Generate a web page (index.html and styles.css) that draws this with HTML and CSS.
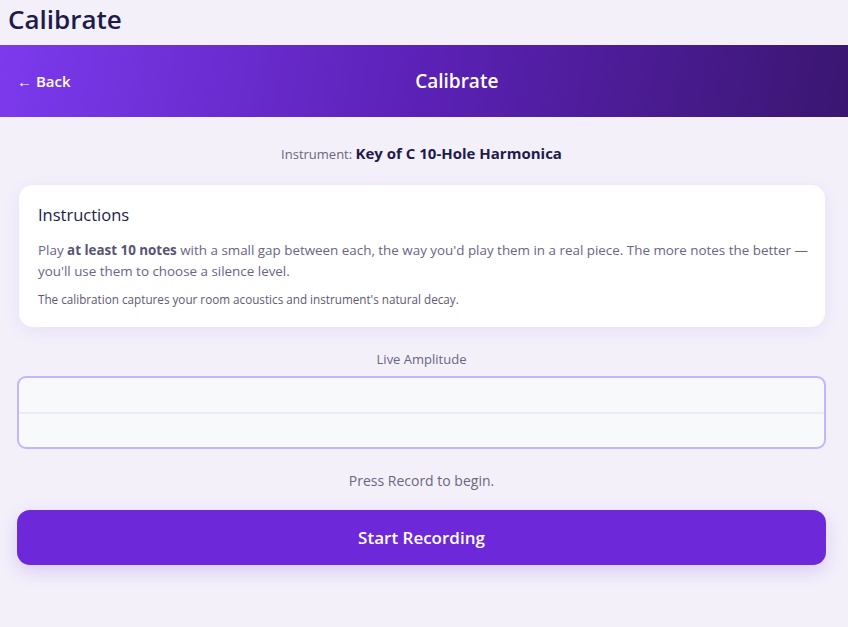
FILE: index.html
```html
<!DOCTYPE html>
<html>
<head>
<meta charset="utf-8">
<link rel="stylesheet" href="styles.css">
</head>
<body>
<h1 class="page-title">Calibrate</h1>
<header class="topbar">
  <a class="back">← Back</a>
  <div class="topbar-title">Calibrate</div>
</header>
<main class="content">
  <p class="instrument">Instrument: <strong>Key of C 10-Hole Harmonica</strong></p>
  <section class="card">
    <h2 class="card-title">Instructions</h2>
    <p class="card-text">Play <strong>at least 10 notes</strong> with a small gap between each, the way you'd play them in a real piece. The more notes the better — you'll use them to choose a silence level.</p>
    <p class="card-note">The calibration captures your room acoustics and instrument's natural decay.</p>
  </section>
  <div class="amp-label">Live Amplitude</div>
  <div class="amp-box"><div class="amp-mid"></div></div>
  <p class="status">Press Record to begin.</p>
  <button class="record">Start Recording</button>
</main>
</body>
</html>
```
FILE: styles.css
```css
* { box-sizing: border-box; }
html, body { margin: 0; padding: 0; }
body {
  background: #f3f0fa;
  font-family: "Open Sans", "Noto Sans", sans-serif;
  color: #1e1b4b;
}
.page-title {
  margin: 0;
  height: 45px;
  padding: 0 8px;
  font-size: 26px;
  line-height: 38px;
  font-weight: 600;
  color: #1e1b4b;
}
.topbar {
  height: 72px;
  display: flex;
  align-items: center;
  gap: 12px;
  padding: 0 17px;
  background: linear-gradient(100deg, #7c3aed 0%, #5b21b6 50%, #3a1670 100%);
  color: #fff;
}
.back {
  font-size: 15px;
  font-weight: 600;
  color: #fff;
}
.topbar-title {
  flex: 1;
  text-align: center;
  font-size: 19px;
  font-weight: 600;
}
.content {
  padding: 0 22px 40px 17px;
  display: flex;
  flex-direction: column;
}
.instrument {
  margin: 25px 0 20px;
  text-align: center;
  font-size: 13px;
  line-height: 22px;
  color: #6b6680;
}
.instrument strong {
  font-size: 15px;
  color: #1e1b4b;
}
.card {
  margin: 0 1px 0 2px;
  background: #fff;
  border-radius: 14px;
  padding: 18px 12px 19px 19px;
  box-shadow: 0 4px 18px rgba(109, 40, 217, 0.08);
}
.card-title {
  margin: 0 0 13px;
  font-size: 16.5px;
  line-height: 24px;
  font-weight: 500;
  color: #1e1b4b;
}
.card-text {
  margin: 0 0 8px;
  font-size: 13.4px;
  line-height: 21px;
  color: #6b6485;
}
.card-text strong { color: #5a5374; }
.card-note {
  margin: 0;
  font-size: 11.7px;
  line-height: 18px;
  color: #5f5a70;
}
.amp-label {
  margin-top: 22px;
  text-align: center;
  font-size: 13px;
  line-height: 20px;
  color: #6b6680;
}
.amp-box {
  margin-top: 7px;
  height: 73px;
  border: 2px solid #c4b5fd;
  border-radius: 9px;
  background: #f8f9fb;
  display: flex;
  align-items: center;
}
.amp-mid {
  width: 100%;
  height: 2px;
  background: #eceaf3;
}
.status {
  margin: 22px 0 19px;
  text-align: center;
  font-size: 14px;
  line-height: 20px;
  color: #6b6680;
}
.record {
  height: 55px;
  border: none;
  border-radius: 13px;
  background: #6d28d9;
  color: #fff;
  font-family: inherit;
  font-size: 17px;
  font-weight: 600;
  box-shadow: 0 6px 18px rgba(109, 40, 217, 0.18);
}
```
